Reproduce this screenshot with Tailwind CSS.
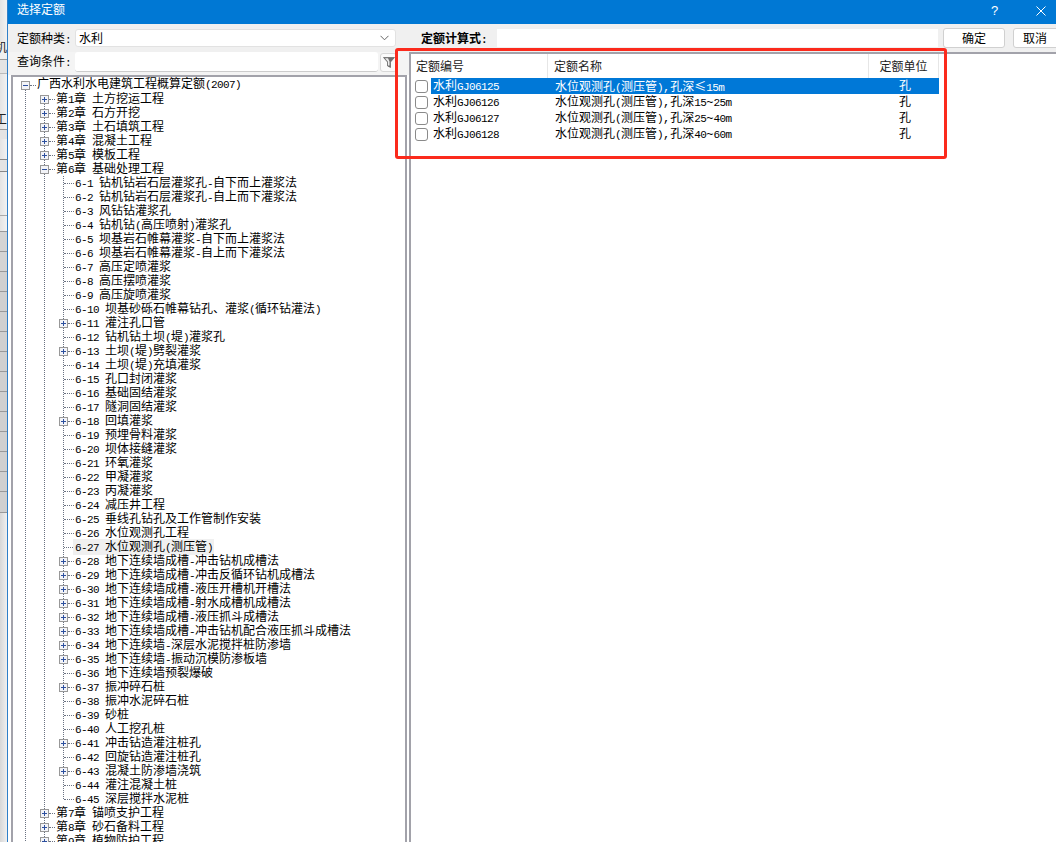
<!DOCTYPE html>
<html lang="zh">
<head>
<meta charset="utf-8">
<script src="https://cdn.jsdelivr.net/npm/@tailwindcss/browser@4"></script>
<title>选择定额</title>
</head>
<body class="m-0 bg-white">
<div class="relative flex h-[842px] w-[1056px] overflow-hidden whitespace-nowrap bg-white font-['Liberation_Mono','Noto_Sans_CJK_SC',monospace] text-[12px] leading-[14px] text-black">

  <!-- background window strip -->
  <div class="flex w-[7px] shrink-0 flex-col overflow-hidden bg-gradient-to-r from-[#e4e4e4] to-[#f2f2f2] text-[#222]">
    <div class="h-[42px]"></div>
    <div class="h-[18px] border-b border-[#999] bg-[#f0f0f0]"><span class="-ml-[5px] inline-block">机</span></div>
    <div class="h-[14px] border-b border-[#bbb] bg-[#e4e4e4]"></div>
    <div class="h-[40px]"></div>
    <div class="h-[16px] border-b border-[#999]"><span class="-ml-[5px] inline-block">工</span></div>
    <div class="h-[9px] bg-[#e4e4e4]"></div>
    <div class="h-[21px] border-b border-[#888]"></div>
    <div class="h-[12px] border-b border-[#888] bg-[#e4e4e4]"></div>
    <div class="h-[44px] border-b border-[#aaa]"></div>
    <div class="h-[16px] border-b border-[#999]"></div>
    <div class="h-[20px] border-b border-[#999] bg-[#d4d4d4]"></div>
    <div class="h-[20px] border-b border-[#999] bg-[#d4d4d4]"></div>
    <div class="h-[20px] border-b border-[#999] bg-[#d0d0d0]"></div>
    <div class="h-[20px] border-b border-[#999] bg-[#d0d0d0]"></div>
    <div class="h-[20px] border-b border-[#999] bg-[#d0d0d0]"></div>
    <div class="h-[20px] border-b border-[#999] bg-[#d0d0d0]"></div>
    <div class="h-[20px] border-b border-[#999] bg-[#d0d0d0]"></div>
    <div class="h-[20px] border-b border-[#999] bg-[#d0d0d0]"></div>
    <div class="h-[20px] border-b border-[#999] bg-[#d0d0d0]"></div>
    <div class="h-[20px] border-b border-[#999] bg-[#d0d0d0]"></div>
    <div class="h-[20px] border-b border-[#999] bg-[#d0d0d0]"></div>
    <div class="h-[20px] border-b border-[#999] bg-[#d0d0d0]"></div>
    <div class="h-[20px] border-b border-[#999] bg-[#d0d0d0]"></div>
    <div class="h-[21px] border-b border-[#999] bg-[#d0d0d0]"></div>
    <div class="flex-1 bg-gradient-to-r from-[#d8d8d8] to-[#f0f0f0]"></div>
  </div>

  <!-- dialog -->
  <div class="flex min-w-0 flex-1 flex-col border-l border-[#2f7fc8]">
    <!-- title bar -->
    <div class="flex h-6 shrink-0 items-center bg-[#0078d4] pl-[9px] pb-[2px] text-white">
      <span class="flex-1">选择定额</span>
      <span class="w-[45px] font-['Liberation_Sans'] text-[13px]">?</span>
      <svg class="mr-[10px] h-[10px] w-[10px]" viewBox="0 0 10 10" fill="none" stroke="#fff" stroke-width="1"><path d="M0.5 0.5l9 9M9.5 0.5l-9 9"/></svg>
    </div>

    <div class="flex min-h-0 flex-1">
      <!-- left column -->
      <div class="flex w-[401px] shrink-0 flex-col">
        <div class="flex h-[28px] shrink-0 items-center bg-[#f0f0f0] pl-[9px]">
          <span class="w-[58px] shrink-0 pt-[3px]">定额种类<span class="text-[11px] tracking-[-0.6px]">:</span></span>
          <div class="flex h-[18px] w-[321px] shrink-0 items-center justify-between rounded-[3px] border border-[#e2e2e2] bg-white pl-[3px] pr-[6px]">
            <span class="pt-[3px]">水利</span>
            <svg class="h-[6px] w-[9px]" viewBox="0 0 9 6" fill="none" stroke="#666" stroke-width="1"><path d="M0.5 0.8l4 4 4-4"/></svg>
          </div>
        </div>
        <div class="flex h-[23px] shrink-0 items-center bg-[#f4f4f4] pb-[3px] pl-[9px]">
          <span class="w-[58px] shrink-0 pt-[2px]">查询条件<span class="text-[11px] tracking-[-0.6px]">:</span></span>
          <div class="h-[20px] w-[303px] shrink-0 rounded-[3px] border-b border-[#ccc] bg-white"></div>
          <div class="ml-[2px] flex h-[19px] w-[17px] shrink-0 items-center justify-center rounded-[3px] border border-[#d8d8d8] bg-[#fbfbfb]">
            <svg class="h-[11px] w-[12px]" viewBox="0 0 12 11"><path d="M0.5 0.5h11l-4 4.6v5.4l-3-1.6v-3.8z" fill="#6f6f6f" stroke="#555" stroke-width="0.6"/><path d="M2 1.2h3l1.5 3.2v4h-1.5V4.8z" fill="#ededed"/></svg>
          </div>
        </div>

        <!-- tree -->
        <div class="relative ml-[3px] min-h-0 w-[396px] flex-1 overflow-hidden border-2 border-b-0 border-[#a2a2aa] pt-px">
          <span class="absolute left-[12px] top-[12px] h-[780px] border-l border-dotted border-gray-500"></span>
          <span class="absolute left-[31px] top-[20px] h-[780px] border-l border-dotted border-gray-500"></span>
          <span class="absolute left-[50px] top-[99px] h-[623px] border-l border-dotted border-gray-500"></span>

          <div class="relative flex h-[14px] items-center pl-[8px]"><svg class="h-[9px] w-[9px] shrink-0" viewBox="0 0 9 9"><rect x=".5" y=".5" width="8" height="8" fill="#f3f4f8" stroke="#989898"/><path d="M2 4.5h5" stroke="#2c4f9e"/></svg><span class="w-[6px] border-t border-dotted border-gray-500"></span><span class="ml-px">广西水利水电建筑工程概算定额<span class="text-[11px] tracking-[-0.6px]">(2007)</span></span></div>

          <div class="relative flex h-[14px] items-center pl-[27px]"><svg class="h-[9px] w-[9px] shrink-0" viewBox="0 0 9 9"><rect x=".5" y=".5" width="8" height="8" fill="#f3f4f8" stroke="#989898"/><path d="M2 4.5h5M4.5 2v5" stroke="#2c4f9e"/></svg><span class="w-[6px] border-t border-dotted border-gray-500"></span><span class="ml-px pt-[2px]">第<span class="text-[11px] tracking-[-0.6px]">1</span>章<span class="text-[11px] tracking-[-0.6px]"> </span>土方挖运工程</span></div>
          <div class="relative flex h-[14px] items-center pl-[27px]"><svg class="h-[9px] w-[9px] shrink-0" viewBox="0 0 9 9"><rect x=".5" y=".5" width="8" height="8" fill="#f3f4f8" stroke="#989898"/><path d="M2 4.5h5M4.5 2v5" stroke="#2c4f9e"/></svg><span class="w-[6px] border-t border-dotted border-gray-500"></span><span class="ml-px pt-[2px]">第<span class="text-[11px] tracking-[-0.6px]">2</span>章<span class="text-[11px] tracking-[-0.6px]"> </span>石方开挖</span></div>
          <div class="relative flex h-[14px] items-center pl-[27px]"><svg class="h-[9px] w-[9px] shrink-0" viewBox="0 0 9 9"><rect x=".5" y=".5" width="8" height="8" fill="#f3f4f8" stroke="#989898"/><path d="M2 4.5h5M4.5 2v5" stroke="#2c4f9e"/></svg><span class="w-[6px] border-t border-dotted border-gray-500"></span><span class="ml-px pt-[2px]">第<span class="text-[11px] tracking-[-0.6px]">3</span>章<span class="text-[11px] tracking-[-0.6px]"> </span>土石填筑工程</span></div>
          <div class="relative flex h-[14px] items-center pl-[27px]"><svg class="h-[9px] w-[9px] shrink-0" viewBox="0 0 9 9"><rect x=".5" y=".5" width="8" height="8" fill="#f3f4f8" stroke="#989898"/><path d="M2 4.5h5M4.5 2v5" stroke="#2c4f9e"/></svg><span class="w-[6px] border-t border-dotted border-gray-500"></span><span class="ml-px pt-[2px]">第<span class="text-[11px] tracking-[-0.6px]">4</span>章<span class="text-[11px] tracking-[-0.6px]"> </span>混凝土工程</span></div>
          <div class="relative flex h-[14px] items-center pl-[27px]"><svg class="h-[9px] w-[9px] shrink-0" viewBox="0 0 9 9"><rect x=".5" y=".5" width="8" height="8" fill="#f3f4f8" stroke="#989898"/><path d="M2 4.5h5M4.5 2v5" stroke="#2c4f9e"/></svg><span class="w-[6px] border-t border-dotted border-gray-500"></span><span class="ml-px pt-[2px]">第<span class="text-[11px] tracking-[-0.6px]">5</span>章<span class="text-[11px] tracking-[-0.6px]"> </span>模板工程</span></div>
          <div class="relative flex h-[14px] items-center pl-[27px]"><svg class="h-[9px] w-[9px] shrink-0" viewBox="0 0 9 9"><rect x=".5" y=".5" width="8" height="8" fill="#f3f4f8" stroke="#989898"/><path d="M2 4.5h5" stroke="#2c4f9e"/></svg><span class="w-[6px] border-t border-dotted border-gray-500"></span><span class="ml-px pt-[2px]">第<span class="text-[11px] tracking-[-0.6px]">6</span>章<span class="text-[11px] tracking-[-0.6px]"> </span>基础处理工程</span></div>

          <div class="relative flex h-[14px] items-center pl-[51px]"><span class="w-[10px] border-t border-dotted border-gray-500"></span><span class="ml-px pt-[2px]"><span class="text-[11px] tracking-[-0.6px]">6-1 </span>钻机钻岩石层灌浆孔<span class="text-[11px] tracking-[-0.6px]">-</span>自下而上灌浆法</span></div>
          <div class="relative flex h-[14px] items-center pl-[51px]"><span class="w-[10px] border-t border-dotted border-gray-500"></span><span class="ml-px pt-[2px]"><span class="text-[11px] tracking-[-0.6px]">6-2 </span>钻机钻岩石层灌浆孔<span class="text-[11px] tracking-[-0.6px]">-</span>自上而下灌浆法</span></div>
          <div class="relative flex h-[14px] items-center pl-[51px]"><span class="w-[10px] border-t border-dotted border-gray-500"></span><span class="ml-px pt-[2px]"><span class="text-[11px] tracking-[-0.6px]">6-3 </span>风钻钻灌浆孔</span></div>
          <div class="relative flex h-[14px] items-center pl-[51px]"><span class="w-[10px] border-t border-dotted border-gray-500"></span><span class="ml-px pt-[2px]"><span class="text-[11px] tracking-[-0.6px]">6-4 </span>钻机钻<span class="text-[11px] tracking-[-0.6px]">(</span>高压喷射<span class="text-[11px] tracking-[-0.6px]">)</span>灌浆孔</span></div>
          <div class="relative flex h-[14px] items-center pl-[51px]"><span class="w-[10px] border-t border-dotted border-gray-500"></span><span class="ml-px pt-[2px]"><span class="text-[11px] tracking-[-0.6px]">6-5 </span>坝基岩石帷幕灌浆<span class="text-[11px] tracking-[-0.6px]">-</span>自下而上灌浆法</span></div>
          <div class="relative flex h-[14px] items-center pl-[51px]"><span class="w-[10px] border-t border-dotted border-gray-500"></span><span class="ml-px pt-[2px]"><span class="text-[11px] tracking-[-0.6px]">6-6 </span>坝基岩石帷幕灌浆<span class="text-[11px] tracking-[-0.6px]">-</span>自上而下灌浆法</span></div>
          <div class="relative flex h-[14px] items-center pl-[51px]"><span class="w-[10px] border-t border-dotted border-gray-500"></span><span class="ml-px pt-[2px]"><span class="text-[11px] tracking-[-0.6px]">6-7 </span>高压定喷灌浆</span></div>
          <div class="relative flex h-[14px] items-center pl-[51px]"><span class="w-[10px] border-t border-dotted border-gray-500"></span><span class="ml-px pt-[2px]"><span class="text-[11px] tracking-[-0.6px]">6-8 </span>高压摆喷灌浆</span></div>
          <div class="relative flex h-[14px] items-center pl-[51px]"><span class="w-[10px] border-t border-dotted border-gray-500"></span><span class="ml-px pt-[2px]"><span class="text-[11px] tracking-[-0.6px]">6-9 </span>高压旋喷灌浆</span></div>
          <div class="relative flex h-[14px] items-center pl-[51px]"><span class="w-[10px] border-t border-dotted border-gray-500"></span><span class="ml-px pt-[2px]"><span class="text-[11px] tracking-[-0.6px]">6-10 </span>坝基砂砾石帷幕钻孔、灌浆<span class="text-[11px] tracking-[-0.6px]">(</span>循环钻灌法<span class="text-[11px] tracking-[-0.6px]">)</span></span></div>
          <div class="relative flex h-[14px] items-center pl-[46px]"><svg class="h-[9px] w-[9px] shrink-0" viewBox="0 0 9 9"><rect x=".5" y=".5" width="8" height="8" fill="#f3f4f8" stroke="#989898"/><path d="M2 4.5h5M4.5 2v5" stroke="#2c4f9e"/></svg><span class="w-[6px] border-t border-dotted border-gray-500"></span><span class="ml-px pt-[2px]"><span class="text-[11px] tracking-[-0.6px]">6-11 </span>灌注孔口管</span></div>
          <div class="relative flex h-[14px] items-center pl-[51px]"><span class="w-[10px] border-t border-dotted border-gray-500"></span><span class="ml-px pt-[2px]"><span class="text-[11px] tracking-[-0.6px]">6-12 </span>钻机钻土坝<span class="text-[11px] tracking-[-0.6px]">(</span>堤<span class="text-[11px] tracking-[-0.6px]">)</span>灌浆孔</span></div>
          <div class="relative flex h-[14px] items-center pl-[46px]"><svg class="h-[9px] w-[9px] shrink-0" viewBox="0 0 9 9"><rect x=".5" y=".5" width="8" height="8" fill="#f3f4f8" stroke="#989898"/><path d="M2 4.5h5M4.5 2v5" stroke="#2c4f9e"/></svg><span class="w-[6px] border-t border-dotted border-gray-500"></span><span class="ml-px pt-[2px]"><span class="text-[11px] tracking-[-0.6px]">6-13 </span>土坝<span class="text-[11px] tracking-[-0.6px]">(</span>堤<span class="text-[11px] tracking-[-0.6px]">)</span>劈裂灌浆</span></div>
          <div class="relative flex h-[14px] items-center pl-[51px]"><span class="w-[10px] border-t border-dotted border-gray-500"></span><span class="ml-px pt-[2px]"><span class="text-[11px] tracking-[-0.6px]">6-14 </span>土坝<span class="text-[11px] tracking-[-0.6px]">(</span>堤<span class="text-[11px] tracking-[-0.6px]">)</span>充填灌浆</span></div>
          <div class="relative flex h-[14px] items-center pl-[51px]"><span class="w-[10px] border-t border-dotted border-gray-500"></span><span class="ml-px pt-[2px]"><span class="text-[11px] tracking-[-0.6px]">6-15 </span>孔口封闭灌浆</span></div>
          <div class="relative flex h-[14px] items-center pl-[51px]"><span class="w-[10px] border-t border-dotted border-gray-500"></span><span class="ml-px pt-[2px]"><span class="text-[11px] tracking-[-0.6px]">6-16 </span>基础固结灌浆</span></div>
          <div class="relative flex h-[14px] items-center pl-[51px]"><span class="w-[10px] border-t border-dotted border-gray-500"></span><span class="ml-px pt-[2px]"><span class="text-[11px] tracking-[-0.6px]">6-17 </span>隧洞固结灌浆</span></div>
          <div class="relative flex h-[14px] items-center pl-[46px]"><svg class="h-[9px] w-[9px] shrink-0" viewBox="0 0 9 9"><rect x=".5" y=".5" width="8" height="8" fill="#f3f4f8" stroke="#989898"/><path d="M2 4.5h5M4.5 2v5" stroke="#2c4f9e"/></svg><span class="w-[6px] border-t border-dotted border-gray-500"></span><span class="ml-px pt-[2px]"><span class="text-[11px] tracking-[-0.6px]">6-18 </span>回填灌浆</span></div>
          <div class="relative flex h-[14px] items-center pl-[51px]"><span class="w-[10px] border-t border-dotted border-gray-500"></span><span class="ml-px pt-[2px]"><span class="text-[11px] tracking-[-0.6px]">6-19 </span>预埋骨料灌浆</span></div>
          <div class="relative flex h-[14px] items-center pl-[51px]"><span class="w-[10px] border-t border-dotted border-gray-500"></span><span class="ml-px pt-[2px]"><span class="text-[11px] tracking-[-0.6px]">6-20 </span>坝体接缝灌浆</span></div>
          <div class="relative flex h-[14px] items-center pl-[51px]"><span class="w-[10px] border-t border-dotted border-gray-500"></span><span class="ml-px pt-[2px]"><span class="text-[11px] tracking-[-0.6px]">6-21 </span>环氧灌浆</span></div>
          <div class="relative flex h-[14px] items-center pl-[51px]"><span class="w-[10px] border-t border-dotted border-gray-500"></span><span class="ml-px pt-[2px]"><span class="text-[11px] tracking-[-0.6px]">6-22 </span>甲凝灌浆</span></div>
          <div class="relative flex h-[14px] items-center pl-[51px]"><span class="w-[10px] border-t border-dotted border-gray-500"></span><span class="ml-px pt-[2px]"><span class="text-[11px] tracking-[-0.6px]">6-23 </span>丙凝灌浆</span></div>
          <div class="relative flex h-[14px] items-center pl-[51px]"><span class="w-[10px] border-t border-dotted border-gray-500"></span><span class="ml-px pt-[2px]"><span class="text-[11px] tracking-[-0.6px]">6-24 </span>减压井工程</span></div>
          <div class="relative flex h-[14px] items-center pl-[51px]"><span class="w-[10px] border-t border-dotted border-gray-500"></span><span class="ml-px pt-[2px]"><span class="text-[11px] tracking-[-0.6px]">6-25 </span>垂线孔钻孔及工作管制作安装</span></div>
          <div class="relative flex h-[14px] items-center pl-[51px]"><span class="w-[10px] border-t border-dotted border-gray-500"></span><span class="ml-px pt-[2px]"><span class="text-[11px] tracking-[-0.6px]">6-26 </span>水位观测孔工程</span></div>
          <div class="relative flex h-[14px] items-center pl-[51px]"><span class="w-[9px] border-t border-dotted border-gray-500"></span><span class="bg-[#f0f0f0] pl-[2px] pr-px pt-[2px]"><span class="text-[11px] tracking-[-0.6px]">6-27 </span>水位观测孔<span class="text-[11px] tracking-[-0.6px]">(</span>测压管<span class="text-[11px] tracking-[-0.6px]">)</span></span></div>
          <div class="relative flex h-[14px] items-center pl-[46px]"><svg class="h-[9px] w-[9px] shrink-0" viewBox="0 0 9 9"><rect x=".5" y=".5" width="8" height="8" fill="#f3f4f8" stroke="#989898"/><path d="M2 4.5h5M4.5 2v5" stroke="#2c4f9e"/></svg><span class="w-[6px] border-t border-dotted border-gray-500"></span><span class="ml-px pt-[2px]"><span class="text-[11px] tracking-[-0.6px]">6-28 </span>地下连续墙成槽<span class="text-[11px] tracking-[-0.6px]">-</span>冲击钻机成槽法</span></div>
          <div class="relative flex h-[14px] items-center pl-[46px]"><svg class="h-[9px] w-[9px] shrink-0" viewBox="0 0 9 9"><rect x=".5" y=".5" width="8" height="8" fill="#f3f4f8" stroke="#989898"/><path d="M2 4.5h5M4.5 2v5" stroke="#2c4f9e"/></svg><span class="w-[6px] border-t border-dotted border-gray-500"></span><span class="ml-px pt-[2px]"><span class="text-[11px] tracking-[-0.6px]">6-29 </span>地下连续墙成槽<span class="text-[11px] tracking-[-0.6px]">-</span>冲击反循环钻机成槽法</span></div>
          <div class="relative flex h-[14px] items-center pl-[46px]"><svg class="h-[9px] w-[9px] shrink-0" viewBox="0 0 9 9"><rect x=".5" y=".5" width="8" height="8" fill="#f3f4f8" stroke="#989898"/><path d="M2 4.5h5M4.5 2v5" stroke="#2c4f9e"/></svg><span class="w-[6px] border-t border-dotted border-gray-500"></span><span class="ml-px pt-[2px]"><span class="text-[11px] tracking-[-0.6px]">6-30 </span>地下连续墙成槽<span class="text-[11px] tracking-[-0.6px]">-</span>液压开槽机开槽法</span></div>
          <div class="relative flex h-[14px] items-center pl-[46px]"><svg class="h-[9px] w-[9px] shrink-0" viewBox="0 0 9 9"><rect x=".5" y=".5" width="8" height="8" fill="#f3f4f8" stroke="#989898"/><path d="M2 4.5h5M4.5 2v5" stroke="#2c4f9e"/></svg><span class="w-[6px] border-t border-dotted border-gray-500"></span><span class="ml-px pt-[2px]"><span class="text-[11px] tracking-[-0.6px]">6-31 </span>地下连续墙成槽<span class="text-[11px] tracking-[-0.6px]">-</span>射水成槽机成槽法</span></div>
          <div class="relative flex h-[14px] items-center pl-[46px]"><svg class="h-[9px] w-[9px] shrink-0" viewBox="0 0 9 9"><rect x=".5" y=".5" width="8" height="8" fill="#f3f4f8" stroke="#989898"/><path d="M2 4.5h5M4.5 2v5" stroke="#2c4f9e"/></svg><span class="w-[6px] border-t border-dotted border-gray-500"></span><span class="ml-px pt-[2px]"><span class="text-[11px] tracking-[-0.6px]">6-32 </span>地下连续墙成槽<span class="text-[11px] tracking-[-0.6px]">-</span>液压抓斗成槽法</span></div>
          <div class="relative flex h-[14px] items-center pl-[46px]"><svg class="h-[9px] w-[9px] shrink-0" viewBox="0 0 9 9"><rect x=".5" y=".5" width="8" height="8" fill="#f3f4f8" stroke="#989898"/><path d="M2 4.5h5M4.5 2v5" stroke="#2c4f9e"/></svg><span class="w-[6px] border-t border-dotted border-gray-500"></span><span class="ml-px pt-[2px]"><span class="text-[11px] tracking-[-0.6px]">6-33 </span>地下连续墙成槽<span class="text-[11px] tracking-[-0.6px]">-</span>冲击钻机配合液压抓斗成槽法</span></div>
          <div class="relative flex h-[14px] items-center pl-[46px]"><svg class="h-[9px] w-[9px] shrink-0" viewBox="0 0 9 9"><rect x=".5" y=".5" width="8" height="8" fill="#f3f4f8" stroke="#989898"/><path d="M2 4.5h5M4.5 2v5" stroke="#2c4f9e"/></svg><span class="w-[6px] border-t border-dotted border-gray-500"></span><span class="ml-px pt-[2px]"><span class="text-[11px] tracking-[-0.6px]">6-34 </span>地下连续墙<span class="text-[11px] tracking-[-0.6px]">-</span>深层水泥搅拌桩防渗墙</span></div>
          <div class="relative flex h-[14px] items-center pl-[46px]"><svg class="h-[9px] w-[9px] shrink-0" viewBox="0 0 9 9"><rect x=".5" y=".5" width="8" height="8" fill="#f3f4f8" stroke="#989898"/><path d="M2 4.5h5M4.5 2v5" stroke="#2c4f9e"/></svg><span class="w-[6px] border-t border-dotted border-gray-500"></span><span class="ml-px pt-[2px]"><span class="text-[11px] tracking-[-0.6px]">6-35 </span>地下连续墙<span class="text-[11px] tracking-[-0.6px]">-</span>振动沉模防渗板墙</span></div>
          <div class="relative flex h-[14px] items-center pl-[51px]"><span class="w-[10px] border-t border-dotted border-gray-500"></span><span class="ml-px pt-[2px]"><span class="text-[11px] tracking-[-0.6px]">6-36 </span>地下连续墙预裂爆破</span></div>
          <div class="relative flex h-[14px] items-center pl-[46px]"><svg class="h-[9px] w-[9px] shrink-0" viewBox="0 0 9 9"><rect x=".5" y=".5" width="8" height="8" fill="#f3f4f8" stroke="#989898"/><path d="M2 4.5h5M4.5 2v5" stroke="#2c4f9e"/></svg><span class="w-[6px] border-t border-dotted border-gray-500"></span><span class="ml-px pt-[2px]"><span class="text-[11px] tracking-[-0.6px]">6-37 </span>振冲碎石桩</span></div>
          <div class="relative flex h-[14px] items-center pl-[51px]"><span class="w-[10px] border-t border-dotted border-gray-500"></span><span class="ml-px pt-[2px]"><span class="text-[11px] tracking-[-0.6px]">6-38 </span>振冲水泥碎石桩</span></div>
          <div class="relative flex h-[14px] items-center pl-[51px]"><span class="w-[10px] border-t border-dotted border-gray-500"></span><span class="ml-px pt-[2px]"><span class="text-[11px] tracking-[-0.6px]">6-39 </span>砂桩</span></div>
          <div class="relative flex h-[14px] items-center pl-[51px]"><span class="w-[10px] border-t border-dotted border-gray-500"></span><span class="ml-px pt-[2px]"><span class="text-[11px] tracking-[-0.6px]">6-40 </span>人工挖孔桩</span></div>
          <div class="relative flex h-[14px] items-center pl-[46px]"><svg class="h-[9px] w-[9px] shrink-0" viewBox="0 0 9 9"><rect x=".5" y=".5" width="8" height="8" fill="#f3f4f8" stroke="#989898"/><path d="M2 4.5h5M4.5 2v5" stroke="#2c4f9e"/></svg><span class="w-[6px] border-t border-dotted border-gray-500"></span><span class="ml-px pt-[2px]"><span class="text-[11px] tracking-[-0.6px]">6-41 </span>冲击钻造灌注桩孔</span></div>
          <div class="relative flex h-[14px] items-center pl-[51px]"><span class="w-[10px] border-t border-dotted border-gray-500"></span><span class="ml-px pt-[2px]"><span class="text-[11px] tracking-[-0.6px]">6-42 </span>回旋钻造灌注桩孔</span></div>
          <div class="relative flex h-[14px] items-center pl-[46px]"><svg class="h-[9px] w-[9px] shrink-0" viewBox="0 0 9 9"><rect x=".5" y=".5" width="8" height="8" fill="#f3f4f8" stroke="#989898"/><path d="M2 4.5h5M4.5 2v5" stroke="#2c4f9e"/></svg><span class="w-[6px] border-t border-dotted border-gray-500"></span><span class="ml-px pt-[2px]"><span class="text-[11px] tracking-[-0.6px]">6-43 </span>混凝土防渗墙浇筑</span></div>
          <div class="relative flex h-[14px] items-center pl-[51px]"><span class="w-[10px] border-t border-dotted border-gray-500"></span><span class="ml-px pt-[2px]"><span class="text-[11px] tracking-[-0.6px]">6-44 </span>灌注混凝土桩</span></div>
          <div class="relative flex h-[14px] items-center pl-[51px]"><span class="w-[10px] border-t border-dotted border-gray-500"></span><span class="ml-px pt-[2px]"><span class="text-[11px] tracking-[-0.6px]">6-45 </span>深层搅拌水泥桩</span></div>

          <div class="relative flex h-[14px] items-center pl-[27px]"><svg class="h-[9px] w-[9px] shrink-0" viewBox="0 0 9 9"><rect x=".5" y=".5" width="8" height="8" fill="#f3f4f8" stroke="#989898"/><path d="M2 4.5h5M4.5 2v5" stroke="#2c4f9e"/></svg><span class="w-[6px] border-t border-dotted border-gray-500"></span><span class="ml-px pt-[2px]">第<span class="text-[11px] tracking-[-0.6px]">7</span>章<span class="text-[11px] tracking-[-0.6px]"> </span>锚喷支护工程</span></div>
          <div class="relative flex h-[14px] items-center pl-[27px]"><svg class="h-[9px] w-[9px] shrink-0" viewBox="0 0 9 9"><rect x=".5" y=".5" width="8" height="8" fill="#f3f4f8" stroke="#989898"/><path d="M2 4.5h5M4.5 2v5" stroke="#2c4f9e"/></svg><span class="w-[6px] border-t border-dotted border-gray-500"></span><span class="ml-px pt-[2px]">第<span class="text-[11px] tracking-[-0.6px]">8</span>章<span class="text-[11px] tracking-[-0.6px]"> </span>砂石备料工程</span></div>
          <div class="relative flex h-[14px] items-center pl-[27px]"><svg class="h-[9px] w-[9px] shrink-0" viewBox="0 0 9 9"><rect x=".5" y=".5" width="8" height="8" fill="#f3f4f8" stroke="#989898"/><path d="M2 4.5h5M4.5 2v5" stroke="#2c4f9e"/></svg><span class="w-[6px] border-t border-dotted border-gray-500"></span><span class="ml-px pt-[2px]">第<span class="text-[11px] tracking-[-0.6px]">9</span>章<span class="text-[11px] tracking-[-0.6px]"> </span>植物防护工程</span></div>
        </div>
      </div>

      <!-- right column -->
      <div class="flex min-w-0 flex-1 flex-col">
        <div class="flex h-[28px] shrink-0 items-center bg-[#f0f0f0] pl-[12px]">
          <span class="w-[76px] shrink-0 pt-[3px] font-bold">定额计算式<span class="text-[11px] tracking-[-0.6px]">:</span></span>
          <div class="h-[18px] w-[441px] shrink-0 bg-white"></div>
          <div class="ml-[5px] flex h-[20px] w-[62px] shrink-0 items-center justify-center rounded-[3px] border border-[#d0d0d0] bg-white pt-[3px]">确定</div>
          <div class="ml-[8px] flex h-[20px] w-[62px] shrink-0 items-center rounded-[3px] border border-[#d0d0d0] bg-white pl-[9px] pt-[3px]">取消</div>
        </div>
        <div class="min-h-0 flex-1 border-l-2 border-t-2 border-[#a2a2aa] bg-white">
          <!-- header -->
          <div class="flex h-[24px] w-[530px] items-center text-[#222]">
            <div class="flex h-full w-[137px] items-center border-r border-[#e6e6e6] pl-[5px] pt-[4px]">定额编号</div>
            <div class="flex h-full w-[321px] items-center border-r border-[#e6e6e6] pl-[6px] pt-[4px]">定额名称</div>
            <div class="flex h-full w-[70px] items-center justify-center border-r border-[#e6e6e6] pt-[4px]">定额单位</div>
          </div>
          <!-- rows -->
          <div class="flex h-[16px] w-[528px] items-center">
            <span class="ml-[4px] h-[13px] w-[13px] shrink-0 rounded-[3px] border border-[#8a8a8a] bg-white"></span>
            <div class="ml-[3px] flex h-full flex-1 items-center bg-[#0078d7] text-white">
              <span class="w-[123px] pl-[2px] pt-[2px]">水利<span class="text-[11px] tracking-[-0.6px]">GJ06125</span></span>
              <span class="w-[322px] pl-[1px] pt-[2px]">水位观测孔<span class="text-[11px] tracking-[-0.6px]">(</span>测压管<span class="text-[11px] tracking-[-0.6px]">)</span>,孔深<span class="font-['Noto_Sans_CJK_SC']">≤</span><span class="text-[11px] tracking-[-0.6px]">15m</span></span>
              <span class="w-[58px] pt-[2px] text-center">孔</span>
            </div>
          </div>
          <div class="flex h-[16px] w-[528px] items-center">
            <span class="ml-[4px] h-[13px] w-[13px] shrink-0 rounded-[3px] border border-[#8a8a8a] bg-white"></span>
            <div class="ml-[3px] flex h-full flex-1 items-center">
              <span class="w-[123px] pl-[2px] pt-[2px]">水利<span class="text-[11px] tracking-[-0.6px]">GJ06126</span></span>
              <span class="w-[322px] pl-[1px] pt-[2px]">水位观测孔<span class="text-[11px] tracking-[-0.6px]">(</span>测压管<span class="text-[11px] tracking-[-0.6px]">)</span>,孔深<span class="text-[11px] tracking-[-0.6px]">15</span>~<span class="text-[11px] tracking-[-0.6px]">25m</span></span>
              <span class="w-[58px] pt-[2px] text-center">孔</span>
            </div>
          </div>
          <div class="flex h-[16px] w-[528px] items-center">
            <span class="ml-[4px] h-[13px] w-[13px] shrink-0 rounded-[3px] border border-[#8a8a8a] bg-white"></span>
            <div class="ml-[3px] flex h-full flex-1 items-center">
              <span class="w-[123px] pl-[2px] pt-[2px]">水利<span class="text-[11px] tracking-[-0.6px]">GJ06127</span></span>
              <span class="w-[322px] pl-[1px] pt-[2px]">水位观测孔<span class="text-[11px] tracking-[-0.6px]">(</span>测压管<span class="text-[11px] tracking-[-0.6px]">)</span>,孔深<span class="text-[11px] tracking-[-0.6px]">25</span>~<span class="text-[11px] tracking-[-0.6px]">40m</span></span>
              <span class="w-[58px] pt-[2px] text-center">孔</span>
            </div>
          </div>
          <div class="flex h-[16px] w-[528px] items-center">
            <span class="ml-[4px] h-[13px] w-[13px] shrink-0 rounded-[3px] border border-[#8a8a8a] bg-white"></span>
            <div class="ml-[3px] flex h-full flex-1 items-center">
              <span class="w-[123px] pl-[2px] pt-[2px]">水利<span class="text-[11px] tracking-[-0.6px]">GJ06128</span></span>
              <span class="w-[322px] pl-[1px] pt-[2px]">水位观测孔<span class="text-[11px] tracking-[-0.6px]">(</span>测压管<span class="text-[11px] tracking-[-0.6px]">)</span>,孔深<span class="text-[11px] tracking-[-0.6px]">40</span>~<span class="text-[11px] tracking-[-0.6px]">60m</span></span>
              <span class="w-[58px] pt-[2px] text-center">孔</span>
            </div>
          </div>
        </div>
      </div>
    </div>
  </div>

  <!-- red annotation -->
  <div class="pointer-events-none absolute left-[395px] top-[48px] h-[111px] w-[552px] rounded-[3px] border-[3px] border-[#fb2a1c]"></div>
</div>
</body>
</html>
